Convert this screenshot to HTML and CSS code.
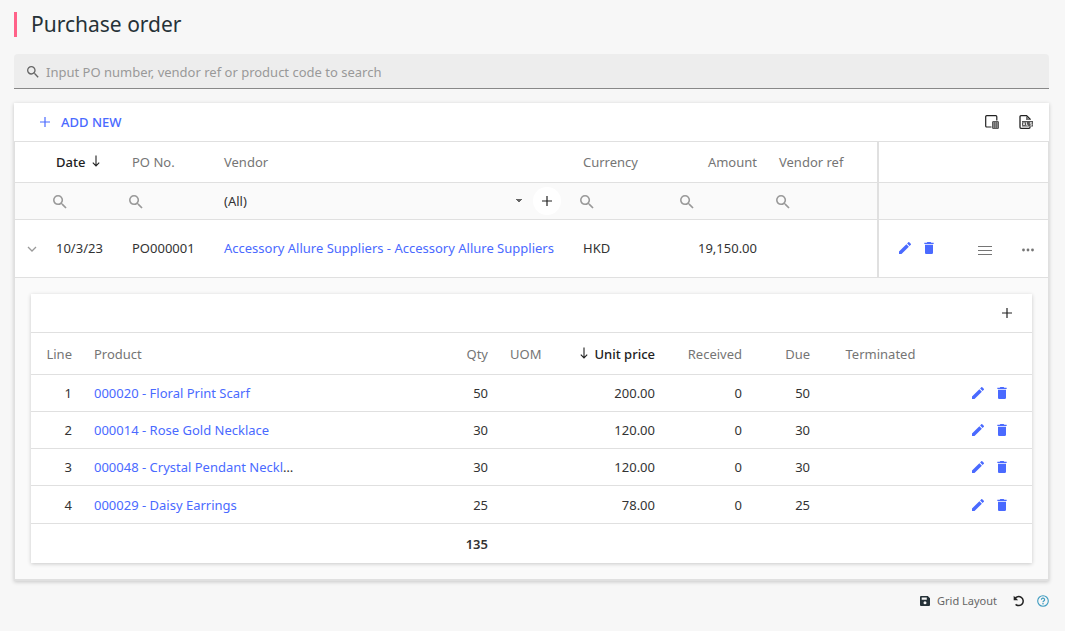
FILE: index.html
```html
<!DOCTYPE html>
<html lang="en">
<head>
    <meta charset="UTF-8">
    <meta name="viewport" content="width=device-width, initial-scale=1.0">
    <title>Purchase order</title>
    <link rel="stylesheet" href="styles.css">
</head>
<body>
    <!-- Shared icons -->
    <svg class="sprite" aria-hidden="true">
        <symbol id="icon-search" viewBox="3 3 18 18"><path d="M15.5 14h-.79l-.28-.27A6.47 6.47 0 0 0 16 9.5 6.5 6.5 0 1 0 9.5 16c1.61 0 3.09-.59 4.23-1.57l.27.28v.79l5 4.99L20.49 19l-4.99-5zm-6 0C7.01 14 5 11.99 5 9.5S7.01 5 9.5 5 14 7.01 14 9.5 11.99 14 9.5 14z"/></symbol>
        <symbol id="icon-plus" viewBox="0 0 10 10"><path d="M4.4 0h1.2v4.4H10v1.2H5.6V10H4.4V5.6H0V4.4h4.4z"/></symbol>
        <symbol id="icon-edit" viewBox="3 3 18 18"><path d="M3 17.25V21h3.75L17.81 9.94l-3.75-3.75L3 17.25zM20.71 7.04a1 1 0 0 0 0-1.41l-2.34-2.34a1 1 0 0 0-1.41 0l-1.83 1.83 3.75 3.75 1.83-1.83z"/></symbol>
        <symbol id="icon-trash" viewBox="3 3 18 18"><path d="M6 19c0 1.1.9 2 2 2h8a2 2 0 0 0 2-2V7H6v12zM19 4h-3.5l-1-1h-5l-1 1H5v2h14V4z"/></symbol>
        <symbol id="icon-sort" viewBox="0 0 8 12"><path d="M4 .5v10M.8 7.6 4 10.9l3.2-3.3" fill="none" stroke="currentColor" stroke-width="1.1"/></symbol>
    </svg>

    <main class="page">
        <h1>Purchase order</h1>

        <div class="search-box">
            <svg class="icon icon-12"><use href="#icon-search"/></svg>
            <input type="search" aria-label="Search" placeholder="Input PO number, vendor ref or product code to search">
        </div>

        <section class="grid">
            <div class="toolbar">
                <button type="button" class="add-button">
                    <svg class="icon icon-10"><use href="#icon-plus"/></svg>
                    <span>ADD NEW</span>
                </button>
                <div class="toolbar-tools">
                    <button type="button" class="icon-button" aria-label="Column chooser">
                        <svg class="icon icon-14" viewBox="0 0 14 14">
                            <path d="M6.5 12H1.7a1 1 0 0 1-1-1V1.700a1 1 0 0 1 1-1h9.100a1 1 0 0 1 1 1V5.500" fill="none" stroke="currentColor" stroke-width="1.200"/>
                            <rect x="7.500" y="6.500" width="6" height="7" rx=".5" fill="#888" stroke="#444" stroke-width=".8"/>
                            <path d="M9.500 7v6M11.500 7v6" stroke="#555" stroke-width=".6"/>
                        </svg>
                    </button>
                    <button type="button" class="icon-button" aria-label="Export to Excel">
                        <svg class="icon icon-14" viewBox="0 0 14 14">
                            <path d="M11 5V4L7.600.700H2a1 1 0 0 0-1 1v10.600a1 1 0 0 0 1 1h8a1 1 0 0 0 1-1v-.8" fill="none" stroke="currentColor" stroke-width="1.300"/>
                            <path d="M7 1v4h4z" fill="#777"/>
                            <rect x="3" y="6" width="11" height="5.500" fill="#555"/>
                            <path d="m4 7.300 2 3m0-3-2 3M7.500 7.200v3h1.600M12.800 7.500h-1.500v1.300h1.500v1.400h-1.700" fill="none" stroke="#fff" stroke-width=".8"/>
                        </svg>
                    </button>
                </div>
            </div>

            <table class="orders">
                <colgroup>
                    <col class="w-expand">
                    <col class="w-date">
                    <col class="w-po">
                    <col>
                    <col class="w-currency">
                    <col class="w-amount">
                    <col class="w-ref">
                    <col class="w-edit">
                    <col class="w-lines">
                    <col class="w-more">
                </colgroup>
                <thead>
                    <tr class="head-row">
                        <td></td>
                        <th class="sorted">Date <svg class="icon icon-sort"><use href="#icon-sort"/></svg></th>
                        <th>PO No.</th>
                        <th>Vendor</th>
                        <th>Currency</th>
                        <th class="num">Amount</th>
                        <th>Vendor ref</th>
                        <td class="fixed" colspan="3"></td>
                    </tr>
                    <tr class="filter-row">
                        <td></td>
                        <td><label class="filter"><svg class="icon icon-14"><use href="#icon-search"/></svg><input type="text" aria-label="Filter date"></label></td>
                        <td><label class="filter"><svg class="icon icon-14"><use href="#icon-search"/></svg><input type="text" aria-label="Filter PO No."></label></td>
                        <td>
                            <div class="vendor-filter">
                                <select aria-label="Filter vendor">
                                    <option>(All)</option>
                                </select>
                                <button type="button" class="round-button" aria-label="Add vendor"><svg class="icon icon-10"><use href="#icon-plus"/></svg></button>
                            </div>
                        </td>
                        <td><label class="filter"><svg class="icon icon-14"><use href="#icon-search"/></svg><input type="text" aria-label="Filter currency"></label></td>
                        <td><label class="filter"><svg class="icon icon-14"><use href="#icon-search"/></svg><input type="text" aria-label="Filter amount"></label></td>
                        <td><label class="filter"><svg class="icon icon-14"><use href="#icon-search"/></svg><input type="text" aria-label="Filter vendor ref"></label></td>
                        <td class="fixed" colspan="3"></td>
                    </tr>
                </thead>
                <tbody>
                    <tr class="order-row">
                        <td class="center expand">
                            <button type="button" class="icon-button muted" aria-label="Collapse">
                                <svg class="icon icon-10" viewBox="0 0 10 10"><path d="m1 3 4 4 4-4" fill="none" stroke="currentColor" stroke-width="1.3"/></svg>
                            </button>
                        </td>
                        <td>10/3/23</td>
                        <td>PO000001</td>
                        <td><a href="#">Accessory Allure Suppliers - Accessory Allure Suppliers</a></td>
                        <td>HKD</td>
                        <td class="num">19,150.00</td>
                        <td></td>
                        <td class="fixed">
                            <div class="actions actions-left">
                                <button type="button" class="icon-button" aria-label="Edit"><svg class="icon icon-12"><use href="#icon-edit"/></svg></button>
                                <button type="button" class="icon-button" aria-label="Delete"><svg class="icon icon-12"><use href="#icon-trash"/></svg></button>
                            </div>
                        </td>
                        <td class="center">
                            <button type="button" class="icon-button gray" aria-label="Details">
                                <svg class="icon icon-14" viewBox="0 0 14 14"><path d="M0 4.500h14M0 8.500h14M0 12.500h14" stroke="currentColor"/></svg>
                            </button>
                        </td>
                        <td class="center">
                            <button type="button" class="icon-button gray" aria-label="More">
                                <svg class="icon icon-12" viewBox="0 0 12 12"><circle cx="1.500" cy="7" r="1.400"/><circle cx="6" cy="7" r="1.400"/><circle cx="10.500" cy="7" r="1.400"/></svg>
                            </button>
                        </td>
                    </tr>
                    <tr>
                        <td class="detail" colspan="10">
                            <div class="detail-card">
                                <div class="toolbar detail-toolbar">
                                    <button type="button" class="icon-button" aria-label="Add line"><svg class="icon icon-10"><use href="#icon-plus"/></svg></button>
                                </div>
                                <table class="lines">
                                    <colgroup>
                                        <col class="w-line">
                                        <col>
                                        <col class="w-qty">
                                        <col class="w-uom">
                                        <col class="w-price">
                                        <col class="w-received">
                                        <col class="w-due">
                                        <col class="w-terminated">
                                        <col class="w-actions">
                                    </colgroup>
                                    <thead>
                                        <tr>
                                            <th class="num">Line</th>
                                            <th>Product</th>
                                            <th class="num">Qty</th>
                                            <th>UOM</th>
                                            <th class="num sorted"><svg class="icon icon-sort"><use href="#icon-sort"/></svg> Unit price</th>
                                            <th class="num">Received</th>
                                            <th class="num">Due</th>
                                            <th class="center">Terminated</th>
                                            <td></td>
                                        </tr>
                                    </thead>
                                    <tbody>
                                        <tr>
                                            <td class="num">1</td>
                                            <td class="product"><a href="#">000020 - Floral Print Scarf</a></td>
                                            <td class="num">50</td>
                                            <td></td>
                                            <td class="num">200.00</td>
                                            <td class="num">0</td>
                                            <td class="num">50</td>
                                            <td></td>
                                            <td>
                                                <div class="actions">
                                                    <button type="button" class="icon-button" aria-label="Edit"><svg class="icon icon-12"><use href="#icon-edit"/></svg></button>
                                                    <button type="button" class="icon-button" aria-label="Delete"><svg class="icon icon-12"><use href="#icon-trash"/></svg></button>
                                                </div>
                                            </td>
                                        </tr>
                                        <tr>
                                            <td class="num">2</td>
                                            <td class="product"><a href="#">000014 - Rose Gold Necklace</a></td>
                                            <td class="num">30</td>
                                            <td></td>
                                            <td class="num">120.00</td>
                                            <td class="num">0</td>
                                            <td class="num">30</td>
                                            <td></td>
                                            <td>
                                                <div class="actions">
                                                    <button type="button" class="icon-button" aria-label="Edit"><svg class="icon icon-12"><use href="#icon-edit"/></svg></button>
                                                    <button type="button" class="icon-button" aria-label="Delete"><svg class="icon icon-12"><use href="#icon-trash"/></svg></button>
                                                </div>
                                            </td>
                                        </tr>
                                        <tr>
                                            <td class="num">3</td>
                                            <td class="product"><a href="#">000048 - Crystal Pendant Necklace</a></td>
                                            <td class="num">30</td>
                                            <td></td>
                                            <td class="num">120.00</td>
                                            <td class="num">0</td>
                                            <td class="num">30</td>
                                            <td></td>
                                            <td>
                                                <div class="actions">
                                                    <button type="button" class="icon-button" aria-label="Edit"><svg class="icon icon-12"><use href="#icon-edit"/></svg></button>
                                                    <button type="button" class="icon-button" aria-label="Delete"><svg class="icon icon-12"><use href="#icon-trash"/></svg></button>
                                                </div>
                                            </td>
                                        </tr>
                                        <tr>
                                            <td class="num">4</td>
                                            <td class="product"><a href="#">000029 - Daisy Earrings</a></td>
                                            <td class="num">25</td>
                                            <td></td>
                                            <td class="num">78.00</td>
                                            <td class="num">0</td>
                                            <td class="num">25</td>
                                            <td></td>
                                            <td>
                                                <div class="actions">
                                                    <button type="button" class="icon-button" aria-label="Edit"><svg class="icon icon-12"><use href="#icon-edit"/></svg></button>
                                                    <button type="button" class="icon-button" aria-label="Delete"><svg class="icon icon-12"><use href="#icon-trash"/></svg></button>
                                                </div>
                                            </td>
                                        </tr>
                                    </tbody>
                                    <tfoot>
                                        <tr>
                                            <td></td>
                                            <td></td>
                                            <td class="num">135</td>
                                            <td colspan="6"></td>
                                        </tr>
                                    </tfoot>
                                </table>
                            </div>
                        </td>
                    </tr>
                </tbody>
            </table>
        </section>

        <footer class="layout-bar">
            <button type="button" class="layout-button">
                <svg class="icon icon-10" viewBox="0 0 10 10"><path fill-rule="evenodd" d="M1 0h6.800L10 2.200V9a1 1 0 0 1-1 1H1a1 1 0 0 1-1-1V1a1 1 0 0 1 1-1zm.7 1.500v2.200h5.100V1.500zM5 5.200a1.500 1.500 0 1 0 0 3 1.500 1.500 0 0 0 0-3z"/></svg>
                <span>Grid Layout</span>
            </button>
            <button type="button" class="icon-button" aria-label="Reset layout">
                <svg class="icon icon-12" viewBox="0 0 12 12"><path d="M1.800 3.800A4.500 4.500 0 1 1 2.600 9.400" fill="none" stroke="currentColor" stroke-width="1.500"/><path d="M.7.800v4.400h4.400z"/></svg>
            </button>
            <button type="button" class="icon-button help" aria-label="Help">
                <svg class="icon icon-12" viewBox="0 0 12 12"><circle cx="6" cy="6" r="5.300" fill="none" stroke="currentColor" stroke-width="1.100"/><path d="M4.400 4.700a1.600 1.600 0 1 1 2.300 1.400c-.5.300-.7.500-.7 1.100" fill="none" stroke="currentColor" stroke-width="1.200"/><circle cx="6" cy="8.700" r=".8"/></svg>
            </button>
        </footer>
    </main>
</body>
</html>
```
FILE: styles.css
```css
* {
    box-sizing: border-box;
}

body {
    font-family: "Noto Sans", sans-serif;
    font-size: 13px;
    line-height: 18px;
    margin: 0;
    background-color: #f7f7f7;
    color: #333;
}

button,
input,
select {
    font: inherit;
    color: inherit;
    border: none;
    background: none;
    padding: 0;
    margin: 0;
    min-width: 0;
}

button {
    cursor: pointer;
}

a {
    color: #4a6aff;
    text-decoration: none;
}

a:hover {
    text-decoration: underline;
}

.page {
    padding: 12px 16px 12px 14px;
}

h1 {
    margin: 0 0 17px;
    padding-left: 14px;
    border-left: 3px solid #ff6289;
    font-size: 21px;
    line-height: 25px;
    font-weight: 400;
    color: #263238;
}

/* Icons */
.sprite {
    display: none;
}

.icon {
    display: block;
    flex: none;
    fill: currentColor;
}

.icon-10 {
    width: 10px;
    height: 10px;
}

.icon-12 {
    width: 12px;
    height: 12px;
}

.icon-14 {
    width: 14px;
    height: 14px;
}

.icon-sort {
    display: inline-block;
    width: 8px;
    height: 12px;
    margin: 0 3px;
}

.icon-button {
    display: inline-block;
    vertical-align: middle;
    color: #222;
}

/* Search */
.search-box {
    display: flex;
    align-items: center;
    gap: 7px;
    height: 35px;
    padding: 1px 13px 0;
    margin-bottom: 14px;
    background-color: #ededed;
    border-bottom: 1px solid #888;
    border-radius: 4px 4px 0 0;
    color: #666;
}

.search-box input {
    flex: 1;
    outline: none;
}

.search-box input::placeholder {
    color: #999;
    opacity: 1;
}

/* Grid */
.grid {
    background-color: #fff;
    box-shadow: 0 1px 4px rgba(0, 0, 0, 0.2);
}

.toolbar {
    display: flex;
    align-items: center;
    justify-content: space-between;
    height: 39px;
    padding: 0 16px 0 26px;
    border-bottom: 1px solid #e0e0e0;
}

.toolbar-tools {
    display: flex;
    gap: 20px;
}

.add-button {
    display: flex;
    align-items: center;
    gap: 11px;
    color: #4a6aff;
    font-weight: 500;
}

table {
    width: 100%;
    table-layout: fixed;
    border-collapse: separate;
    border-spacing: 0;
}

th,
td {
    padding: 0 11px;
    text-align: left;
    white-space: nowrap;
    border-bottom: 1px solid #e0e0e0;
}

th {
    font-weight: 400;
    color: #757575;
}

th.sorted {
    color: #222;
    font-weight: 500;
}

.num {
    text-align: right;
}

.center {
    text-align: center;
    padding: 0;
}

.orders {
    border: 1px solid #e0e0e0;
    border-top: none;
    border-bottom-width: 2px;
}

.w-expand { width: 30px; }
.w-date { width: 76px; }
.w-po { width: 92px; }
.w-currency { width: 100px; }
.w-amount { width: 96px; }
.w-ref { width: 109px; }
.w-edit { width: 86px; }
.w-lines { width: 44px; }
.w-more { width: 41px; }

.head-row {
    height: 41px;
}

.filter-row {
    height: 37px;
    background-color: #fafafa;
}

.order-row {
    height: 58px;
}

.order-row td {
    padding-bottom: 2px;
}

.order-row .expand {
    padding-left: 4px;
}

.fixed {
    border-left: 2px solid #e0e0e0;
}

.filter-row td {
    padding: 0 8px;
}

.filter {
    display: flex;
    align-items: center;
    padding-top: 2px;
    color: #999;
}

.filter input {
    flex: 1;
    width: 0;
    outline: none;
}

.vendor-filter {
    display: flex;
    align-items: center;
    padding: 0 3px;
}

.vendor-filter select {
    flex: 1;
    appearance: none;
    background: linear-gradient(to bottom right, #666 50%, transparent 50%) right 10px center / 4px 4px no-repeat,
        linear-gradient(to bottom left, #666 50%, transparent 50%) right 14px center / 4px 4px no-repeat;
}

.round-button {
    display: flex;
    align-items: center;
    justify-content: center;
    width: 28px;
    height: 28px;
    border-radius: 50%;
    background-color: #fff;
    color: #222;
}

.actions {
    display: flex;
    justify-content: flex-end;
    gap: 12px;
    padding-right: 13px;
}

.actions-left {
    justify-content: flex-start;
    padding: 0 0 0 9px;
}

.actions .icon-button {
    color: #4a6aff;
}

.muted {
    color: #999;
}

.gray {
    color: #757575;
}

/* Order lines */
.detail {
    padding: 16px;
    background-color: #fafafa;
    border-bottom: none;
}

.detail-card {
    background-color: #fff;
    box-shadow: 0 1px 4px rgba(0, 0, 0, 0.2);
}

.detail-toolbar {
    justify-content: flex-end;
    padding: 0 20px;
}

.lines tr {
    height: 37px;
}

.lines thead tr {
    height: 42px;
}

.lines tbody tr:last-child {
    height: 38px;
}

.lines tfoot tr {
    height: 39px;
}

.lines tfoot td {
    font-weight: 600;
    border-bottom: none;
}

.product {
    overflow: hidden;
    text-overflow: ellipsis;
}

.w-line { width: 52px; }
.w-qty { width: 194px; }
.w-uom { width: 61px; }
.w-price { width: 106px; }
.w-received { width: 87px; }
.w-due { width: 68px; }
.w-terminated { width: 119px; }
.w-actions { width: 92px; }

/* Layout bar */
.layout-bar {
    display: flex;
    align-items: center;
    justify-content: flex-end;
    gap: 12px;
    margin-top: 11px;
}

.layout-button {
    display: flex;
    align-items: center;
    gap: 7px;
    margin-right: 4px;
    font-size: 11px;
    color: #666;
}

.layout-button .icon {
    color: #263238;
}

.help {
    color: #3f9cc0;
}
```
